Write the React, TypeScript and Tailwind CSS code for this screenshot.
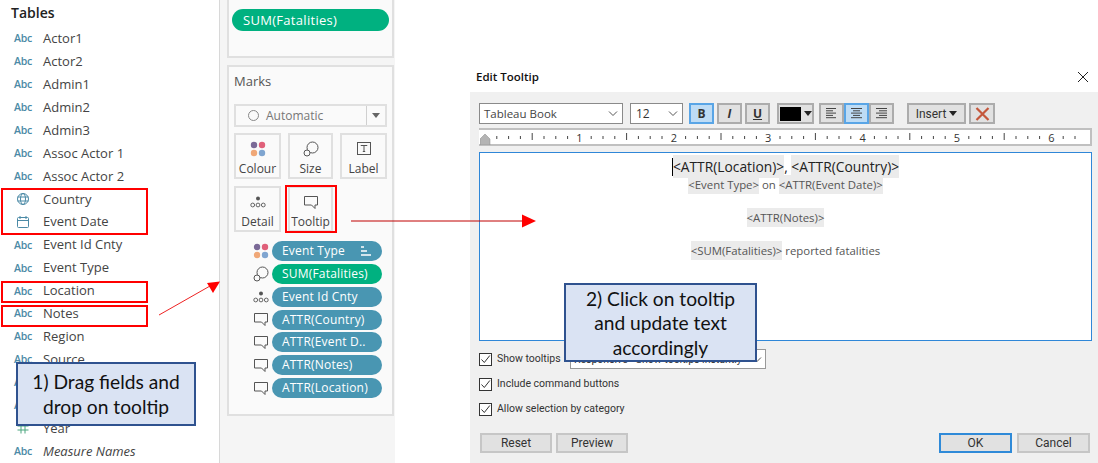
import React from "react";

const tableau = { fontFamily: '"Open Sans","Noto Sans",sans-serif' };
const win = { fontFamily: 'Roboto,"Noto Sans",sans-serif' };

function Abc() {
  return <span className="w-[18px] text-[10.5px] font-semibold text-[#4b8aa6] leading-none tracking-[-0.2px]">Abc</span>;
}
function Globe() {
  return (
    <svg width="14" height="14" viewBox="0 0 14 14" fill="none" stroke="#4b8aa6" strokeWidth="1" className="ml-[2px] mr-[2px]">
      <circle cx="7" cy="7" r="5.5" />
      <ellipse cx="7" cy="7" rx="2.5" ry="5.5" />
      <path d="M1.5 5h11M1.5 9h11" />
    </svg>
  );
}
function Cal() {
  return (
    <svg width="14" height="14" viewBox="0 0 14 14" fill="none" stroke="#4b8aa6" strokeWidth="1" className="ml-[2px] mr-[2px]">
      <rect x="1.5" y="2.5" width="11" height="10" rx="1" />
      <path d="M1.5 5.5h11M4 1v3M10 1v3" />
    </svg>
  );
}
function Hash() {
  return (
    <svg width="14" height="14" viewBox="0 0 14 14" fill="none" stroke="#4aa57f" strokeWidth="1" className="ml-[2px] mr-[2px]">
      <path d="M5 1.500v11M9 1.500v11M1.500 5h11M1.500 9h11" />
    </svg>
  );
}

const fields: [React.ReactNode, string, boolean?][] = [
  [<Abc />, "Actor1"],
  [<Abc />, "Actor2"],
  [<Abc />, "Admin1"],
  [<Abc />, "Admin2"],
  [<Abc />, "Admin3"],
  [<Abc />, "Assoc Actor 1"],
  [<Abc />, "Assoc Actor 2"],
  [<Globe />, "Country"],
  [<Cal />, "Event Date"],
  [<Abc />, "Event Id Cnty"],
  [<Abc />, "Event Type"],
  [<Abc />, "Location"],
  [<Abc />, "Notes"],
  [<Abc />, "Region"],
  [<Abc />, "Source"],
  [<Abc />, ""],
  [<Abc />, " "],
  [<Hash />, "Year"],
  [<Abc />, "Measure Names", true],
];

function Dots4() {
  return (
    <svg width="16" height="16" viewBox="0 0 16 16">
      <circle cx="4" cy="4" r="3.2" fill="#7b6a97" />
      <circle cx="12" cy="4" r="3.2" fill="#e0607a" />
      <circle cx="4" cy="12" r="3.2" fill="#f0a878" />
      <circle cx="12" cy="12" r="3.2" fill="#7fa5d0" />
    </svg>
  );
}
function SizeIcon() {
  return (
    <svg width="16" height="16" viewBox="0 0 16 16" fill="none" stroke="#555" strokeWidth="1">
      <circle cx="9.500" cy="6.500" r="5.500" fill="#fafafa" />
      <circle cx="4" cy="12" r="3" fill="#fafafa" />
    </svg>
  );
}
function LabelIcon() {
  return (
    <svg width="16" height="16" viewBox="0 0 16 16" fill="none" stroke="#555" strokeWidth="1">
      <rect x="1.500" y="1.500" width="13" height="12" />
      <path d="M5 5V4.500h6V5M8 4.500v6M6.800 10.500h2.400" />
    </svg>
  );
}
function DetailIcon() {
  return (
    <svg width="16" height="16" viewBox="0 0 16 16" fill="none" stroke="#555" strokeWidth="0.9">
      <circle cx="8" cy="4.500" r="2" fill="#555" stroke="none" />
      <circle cx="2.700" cy="11" r="1.900" />
      <circle cx="8" cy="11" r="1.900" />
      <circle cx="13.300" cy="11" r="1.900" />
    </svg>
  );
}
function Bubble() {
  return (
    <svg width="16" height="15" viewBox="0 0 16 15" fill="none" stroke="#555" strokeWidth="1">
      <path d="M1.500 1.500h13v8.500h-2.500v3.500l-3.500-3.500h-7z" />
    </svg>
  );
}

function MarkBtn({ icon, label, w }: { icon: React.ReactNode; label: string; w: string }) {
  return (
    <div className={`${w} h-[46px] border-2 border-[#e0e0e0] bg-[#fafafa] flex flex-col items-center pt-[5px]`}>
      <div className="h-[18px] flex items-center">{icon}</div>
      <span className="text-[12px] leading-[16px] text-[#444] mt-[3px]">{label}</span>
    </div>
  );
}

const pills: [React.ReactNode, string, string][] = [
  [<Dots4 />, "Event Type", "bg-[#4996b2]"],
  [<SizeIcon />, "SUM(Fatalities)", "bg-[#00b180]"],
  [<DetailIcon />, "Event Id Cnty", "bg-[#4996b2]"],
  [<Bubble />, "ATTR(Country)", "bg-[#4996b2]"],
  [<Bubble />, "ATTR(Event D..", "bg-[#4996b2]"],
  [<Bubble />, "ATTR(Notes)", "bg-[#4996b2]"],
  [<Bubble />, "ATTR(Location)", "bg-[#4996b2]"],
];

function Ruler() {
  const ticks = [];
  for (let i = 1; i < 52; i++) {
    const x = 5 + i * 11.8;
    if (x > 606) break;
    if (i % 8 === 0) continue;
    const long = i % 4 === 0;
    ticks.push(<line key={i} x1={x} x2={x} y1={long ? 3 : 6} y2={long ? 10 : 9} stroke="#444" strokeWidth="1" />);
  }
  return (
    <svg width="610" height="15" className="block">
      {ticks}
      {[1, 2, 3, 4, 5, 6].map((n) => (
        <text key={n} x={5 + n * 94.4} y="12" textAnchor="middle" fontSize="11" fill="#333" fontFamily="Open Sans">{n}</text>
      ))}
      <path d="M0 15V9l5-5 5 5v6z" fill="#b4b4b4" stroke="#888" strokeWidth="0.5" />
    </svg>
  );
}

function Chevron({ color = "#555" }: { color?: string }) {
  return (
    <svg width="10" height="6" viewBox="0 0 10 6" fill="none" stroke={color} strokeWidth="1">
      <path d="M1 .5l4 4 4-4" />
    </svg>
  );
}

function TB({ children, active, cls = "" }: { children: React.ReactNode; active?: boolean; cls?: string }) {
  return (
    <div className={`h-[21px] flex items-center justify-center border-2 ${active ? "border-[#59a5e6] bg-[#bedcf5]" : "border-[#acacac] bg-[#e1e1e1]"} ${cls}`}>
      {children}
    </div>
  );
}

function AlignIcon({ kind }: { kind: "l" | "c" | "r" }) {
  const rows: [number, number][] =
    kind === "l" ? [[1, 11], [1, 8], [1, 11], [1, 8], [1, 11]] : kind === "c" ? [[1, 12], [3, 10], [1, 12], [3, 10], [1, 12]] : [[1, 12], [4, 12], [1, 12], [4, 12], [1, 12]];
  return (
    <svg width="13" height="11" viewBox="0 0 13 11" stroke="#444" strokeWidth="1">
      {rows.map(([a, b], i) => (
        <line key={i} x1={a} x2={b} y1={0.5 + i * 2.3} y2={0.5 + i * 2.3} />
      ))}
    </svg>
  );
}

function Check({ label }: { label: string }) {
  return (
    <div className="flex items-center gap-[5px] h-[13px]">
      <div className="w-[13px] h-[13px] border border-[#333] bg-white flex items-center justify-center">
        <svg width="11" height="11" viewBox="0 0 11 11" fill="none" stroke="#333" strokeWidth="1">
          <path d="M1.500 5.500l2.800 3 5.500-7" />
        </svg>
      </div>
      <span className="text-[10.500px] leading-none whitespace-nowrap text-[#333]" style={win}>{label}</span>
    </div>
  );
}

function Btn({ label, primary, w }: { label: string; primary?: boolean; w: string }) {
  return (
    <div className={`${w} h-[20px] flex items-center justify-center text-[12px] text-[#333] bg-[#e1e1e1] border-2 ${primary ? "border-[#2f8ad8]" : "border-[#c6c6c6]"}`} style={win}>
      {label}
    </div>
  );
}

const Hl = ({ children }: { children: React.ReactNode }) => <span className="bg-[#ebebeb] py-[2px]">{children}</span>;

export default function App() {
  return (
    <div className="relative w-[1098px] h-[463px] overflow-hidden flex bg-white" style={tableau}>
      {/* Data pane */}
      <div className="w-[220px] h-full border-r border-[#d8d8d8] bg-white pt-[4px] shrink-0">
        <div className="pl-[11px] h-[22px] text-[14px] font-semibold text-[#222] leading-[17px]">Tables</div>
        <div className="mt-[1px]">
          {fields.map(([icon, name, italic], i) => (
            <div key={i} className="h-[22.94px] flex items-center pl-[14px] gap-[11px]">
              {icon}
              <span className={`text-[13px] leading-none text-[#444] whitespace-nowrap ${italic ? "italic" : ""}`}>{name}</span>
            </div>
          ))}
        </div>
      </div>

      {/* Middle */}
      <div className="w-[175px] h-full bg-[#f5f5f5] shrink-0 pl-[7px] pr-[1px] flex flex-col">
        <div className="h-[58px] bg-[#fafafa] border-x-2 border-b-2 border-[#e0e0e0] px-[3px] pt-[9px]">
          <div className="h-[22px] rounded-full bg-[#00b180] text-white text-[13px] tracking-[0.3px] leading-[22px] pl-[11px]">SUM(Fatalities)</div>
        </div>
        <div className="mt-[7px] h-[351px] bg-[#fafafa] border-2 border-[#e0e0e0] px-[5px] pt-[5px]">
          <div className="text-[13px] leading-[18px] text-[#555]">Marks</div>
          <div className="mt-[14px] h-[23px] w-[153px] border-2 border-[#e0e0e0] flex items-center bg-[#fafafa]">
            <div className="w-[131px] flex items-center pl-[12px] gap-[7px] border-r border-[#d0d0d0] h-full">
              <span className="w-[11px] h-[11px] rounded-full border border-[#888]" />
              <span className="text-[12px] text-[#777] leading-none">Automatic</span>
            </div>
            <div className="flex-1 flex justify-center">
              <span className="w-0 h-0 border-x-[4px] border-x-transparent border-t-[5px] border-t-[#666]" />
            </div>
          </div>
          <div className="mt-[6px] flex gap-[7px]">
            <MarkBtn icon={<Dots4 />} label="Colour" w="w-[47px]" />
            <MarkBtn icon={<SizeIcon />} label="Size" w="w-[45px]" />
            <MarkBtn icon={<LabelIcon />} label="Label" w="w-[47px]" />
          </div>
          <div className="mt-[7px] flex gap-[7px]">
            <MarkBtn icon={<DetailIcon />} label="Detail" w="w-[47px]" />
            <MarkBtn icon={<Bubble />} label="Tooltip" w="w-[45px]" />
          </div>
          <div className="mt-[9px] flex flex-col gap-[2.85px] pl-[19px]">
            {pills.map(([icon, text, color], i) => (
              <div key={text} className="flex items-center gap-[3px]">
                <div className="w-[16px] flex justify-center">{icon}</div>
                <div className={`${color} w-[110px] h-[20px] rounded-full text-white text-[12px] tracking-[0.2px] leading-[20px] pl-[10px] whitespace-nowrap relative`}>
                  {text}
                  {i === 0 && (
                    <svg width="10" height="10" viewBox="0 0 10 10" stroke="#fff" strokeWidth="1.4" className="absolute right-[11px] top-[5px]">
                      <path d="M0 1h3M0 5h6M0 9h10" />
                    </svg>
                  )}
                </div>
              </div>
            ))}
          </div>
        </div>
      </div>

      {/* Dialog */}
      <div className="flex-1 pl-[75px] h-full flex flex-col">
        <div className="h-[92px] pt-[68px] px-[6px] flex justify-between items-start">
          <span className="text-[11.5px] leading-[18px] font-semibold text-[#111]">Edit Tooltip</span>
          <svg width="12" height="12" viewBox="0 0 12 12" stroke="#222" strokeWidth="1" className="mr-[4px] mt-[3px]">
            <path d="M1 1l10 10M11 1L1 11" />
          </svg>
        </div>
        <div className="flex-1 bg-[#f0f0f0] pl-[9px] pr-[7px] pt-[11px] flex flex-col">
          <div className="flex items-center h-[21px]">
            <div className="w-[144px] h-[21px] bg-white border border-[#8a8a8a] flex items-center justify-between pl-[4px] pr-[4px] text-[11.500px] text-[#444]">
              Tableau Book <Chevron />
            </div>
            <div className="w-[53px] ml-[7px] h-[21px] bg-white border border-[#8a8a8a] flex items-center justify-between pl-[5px] pr-[4px] text-[12px] text-[#333]">
              12 <Chevron />
            </div>
            <TB active cls="w-[25px] ml-[6px] font-bold text-[12px] text-[#333]">B</TB>
            <TB cls="w-[25px] ml-[3px] font-bold italic text-[12px] text-[#333]">I</TB>
            <TB cls="w-[25px] ml-[3px] font-bold underline text-[12px] text-[#333]">U</TB>
            <TB cls="w-[37px] ml-[7px] gap-[3px]">
              <span className="w-[21px] h-[14px] bg-black" />
              <span className="w-0 h-0 border-x-[4px] border-x-transparent border-t-[5px] border-t-[#222]" />
            </TB>
            <TB cls="w-[25px] ml-[5px]"><AlignIcon kind="l" /></TB>
            <TB active cls="w-[25px]"><AlignIcon kind="c" /></TB>
            <TB cls="w-[25px]"><AlignIcon kind="r" /></TB>
            <TB cls="w-[59px] ml-[13px] gap-[3px] text-[12px] text-[#333]">
              <span style={win}>Insert</span>
              <span className="w-0 h-0 border-x-[4px] border-x-transparent border-t-[5px] border-t-[#222]" />
            </TB>
            <TB cls="w-[26px] ml-[3px]">
              <svg width="15" height="14" viewBox="0 0 15 14" stroke="#c4573c" strokeWidth="2.2">
                <path d="M1.500 1l12 12M13.500 1l-12 12" />
              </svg>
            </TB>
          </div>
          <div className="mt-[4px] h-[18px] bg-white border-y-2 border-r-2 border-[#c0c0c0] pl-[1px]">
            <Ruler />
          </div>
          <div className="mt-[6px] h-[189px] bg-white border border-[#2f87d8] pt-[5px] flex flex-col items-center text-[#555] text-[11.400px] leading-[17px]">
            <div className="text-[13.800px] leading-[18px] text-[#222] whitespace-nowrap border-l border-black">
              <Hl>&lt;ATTR(Location)&gt;</Hl>, <Hl>&lt;ATTR(Country)&gt;</Hl>
            </div>
            <div className="whitespace-nowrap"><Hl>&lt;Event Type&gt;</Hl> on <Hl>&lt;ATTR(Event Date)&gt;</Hl></div>
            <div className="whitespace-nowrap mt-[16px]"><Hl>&lt;ATTR(Notes)&gt;</Hl></div>
            <div className="whitespace-nowrap mt-[16px]"><Hl>&lt;SUM(Fatalities)&gt;</Hl> reported fatalities</div>
          </div>
          <div className="mt-[12px] flex items-center relative">
            <Check label="Show tooltips" />
            <div className="absolute left-[91px] top-[-4px] w-[196px] h-[20px] bg-white border border-[#999] flex items-end justify-between pl-[3px] pr-[3px] pb-[3px] text-[#333] whitespace-nowrap overflow-hidden" style={win}>
              <span className="text-[10.500px] leading-none">Responsive - Show tooltips instantly</span>
              <span className="pb-[2px]"><Chevron /></span>
            </div>
          </div>
          <div className="mt-[12px]"><Check label="Include command buttons" /></div>
          <div className="mt-[12px]"><Check label="Allow selection by category" /></div>
          <div className="mt-[17px] flex items-center pl-[1px]">
            <Btn label="Reset" w="w-[72px]" />
            <div className="ml-[4px]"><Btn label="Preview" w="w-[72px]" /></div>
            <div className="ml-[311px]"><Btn label="OK" primary w="w-[73px]" /></div>
            <div className="ml-[5px]"><Btn label="Cancel" w="w-[73px]" /></div>
          </div>
        </div>
      </div>

      {/* Annotation overlays */}
      <div className="absolute left-[1px] top-[188px] w-[147px] h-[47px] border-2 border-[#ff0000]" />
      <div className="absolute left-[1px] top-[281px] w-[147px] h-[22px] border-2 border-[#ff0000]" />
      <div className="absolute left-[1px] top-[305px] w-[147px] h-[22px] border-2 border-[#ff0000]" />
      <div className="absolute left-[285px] top-[185px] w-[52px] h-[48px] border-2 border-[#ff0000]" />

      <svg className="absolute left-0 top-0 pointer-events-none" width="1098" height="463">
        <line x1="159" y1="315" x2="210" y2="286" stroke="#ee2222" strokeWidth="1" />
        <path d="M220 281.500l-13 1.500 6 10z" fill="#ff0000" />
        <line x1="351" y1="221" x2="524" y2="221" stroke="#c00000" strokeWidth="1" />
        <path d="M536 221l-14-6.500v13z" fill="#ff0000" />
      </svg>

      <div
        className="absolute left-[16px] top-[362px] w-[180px] h-[64px] bg-[#dae3f3] border-2 border-[#2f528f] flex items-center justify-center text-center text-[19.200px] leading-[25px] text-[#111]"
        style={{ fontFamily: "Lato, sans-serif" }}
      >
        1) Drag fields and<br />drop on tooltip
      </div>
      <div
        className="absolute left-[564px] top-[283px] w-[193px] h-[79px] bg-[#dae3f3] border-2 border-[#2f528f] flex items-center justify-center text-center text-[19.200px] leading-[24.500px] text-[#111] pt-[2px]"
        style={{ fontFamily: "Lato, sans-serif" }}
      >
        2) Click on tooltip<br />and update text<br />accordingly
      </div>
    </div>
  );
}
